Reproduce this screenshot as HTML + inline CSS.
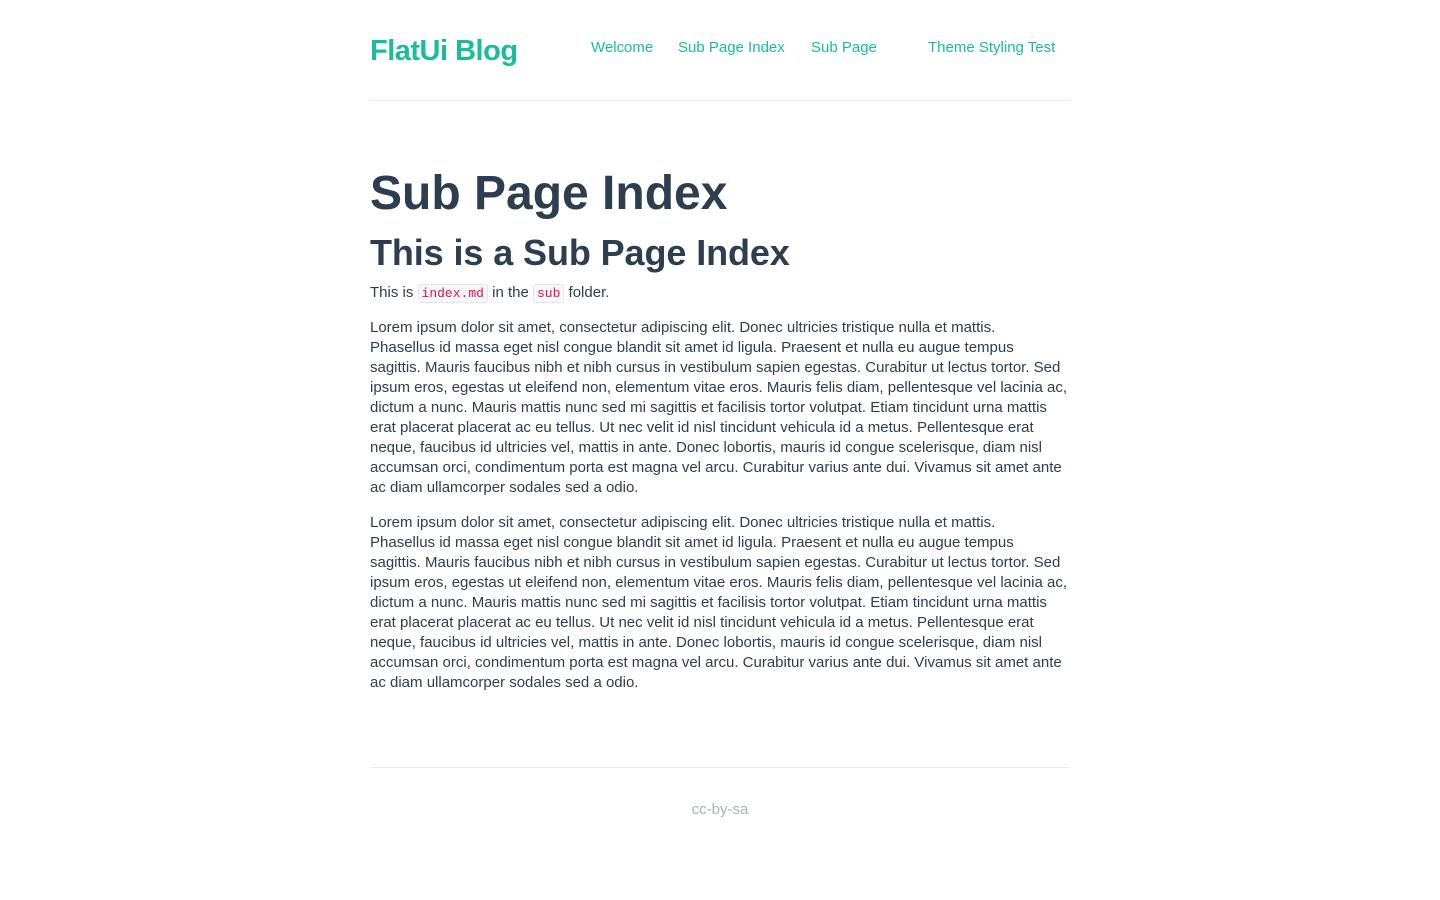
<!DOCTYPE html>
<html><head><meta charset="utf-8"><style>
body{margin:0;background:#fff;font-family:"Liberation Sans",Arial,sans-serif;color:#2c3e50;}
.wrap{position:relative;width:700px;margin:0 auto;height:900px;}
.logo{position:absolute;left:0;top:35px;font-size:29px;font-weight:bold;color:#1abc9c;letter-spacing:-0.5px}
.nav a{position:absolute;top:39px;font-size:15px;color:#1abc9c;text-decoration:none;}
.hr{position:absolute;left:0;width:700px;height:1px;background:#e7eded;}
h1{position:absolute;left:0;top:166px;margin:0;font-size:48px;line-height:56px;font-weight:bold;}
h2{position:absolute;left:0;top:231px;margin:0;font-size:36px;line-height:44px;font-weight:bold;letter-spacing:-0.1px}
p{position:absolute;left:0;margin:0;width:720px;font-size:15px;line-height:20px;white-space:nowrap;}
code{font-family:"Liberation Mono",monospace;font-size:13px;color:#e0144c;background:#f8f8f9;border:1px solid #e4e6e8;border-radius:3px;padding:1px 3px;}
.foot{position:absolute;top:801px;left:0;width:700px;text-align:center;color:#aab2b8;font-size:15px;}
</style></head><body><div class="wrap">
<div class="logo">FlatUi Blog</div>
<div class="nav"><a style="left:221px">Welcome</a><a style="left:308px">Sub Page Index</a><a style="left:441px">Sub Page</a><a style="left:558px">Theme Styling Test</a></div>
<div class="hr" style="top:100px"></div>
<h1>Sub Page Index</h1>
<h2>This is a Sub Page Index</h2>
<p style="top:283px">This is <code>index.md</code> in the <code>sub</code> folder.</p>
<p style="top:318px">Lorem ipsum dolor sit amet, consectetur adipiscing elit. Donec ultricies tristique nulla et mattis.<br>Phasellus id massa eget nisl congue blandit sit amet id ligula. Praesent et nulla eu augue tempus<br>sagittis. Mauris faucibus nibh et nibh cursus in vestibulum sapien egestas. Curabitur ut lectus tortor. Sed<br>ipsum eros, egestas ut eleifend non, elementum vitae eros. Mauris felis diam, pellentesque vel lacinia ac,<br>dictum a nunc. Mauris mattis nunc sed mi sagittis et facilisis tortor volutpat. Etiam tincidunt urna mattis<br>erat placerat placerat ac eu tellus. Ut nec velit id nisl tincidunt vehicula id a metus. Pellentesque erat<br>neque, faucibus id ultricies vel, mattis in ante. Donec lobortis, mauris id congue scelerisque, diam nisl<br>accumsan orci, condimentum porta est magna vel arcu. Curabitur varius ante dui. Vivamus sit amet ante<br>ac diam ullamcorper sodales sed a odio.</p>
<p style="top:513px">Lorem ipsum dolor sit amet, consectetur adipiscing elit. Donec ultricies tristique nulla et mattis.<br>Phasellus id massa eget nisl congue blandit sit amet id ligula. Praesent et nulla eu augue tempus<br>sagittis. Mauris faucibus nibh et nibh cursus in vestibulum sapien egestas. Curabitur ut lectus tortor. Sed<br>ipsum eros, egestas ut eleifend non, elementum vitae eros. Mauris felis diam, pellentesque vel lacinia ac,<br>dictum a nunc. Mauris mattis nunc sed mi sagittis et facilisis tortor volutpat. Etiam tincidunt urna mattis<br>erat placerat placerat ac eu tellus. Ut nec velit id nisl tincidunt vehicula id a metus. Pellentesque erat<br>neque, faucibus id ultricies vel, mattis in ante. Donec lobortis, mauris id congue scelerisque, diam nisl<br>accumsan orci, condimentum porta est magna vel arcu. Curabitur varius ante dui. Vivamus sit amet ante<br>ac diam ullamcorper sodales sed a odio.</p>
<div class="hr" style="top:767px"></div>
<div class="foot">cc-by-sa</div>
</div></body></html>
